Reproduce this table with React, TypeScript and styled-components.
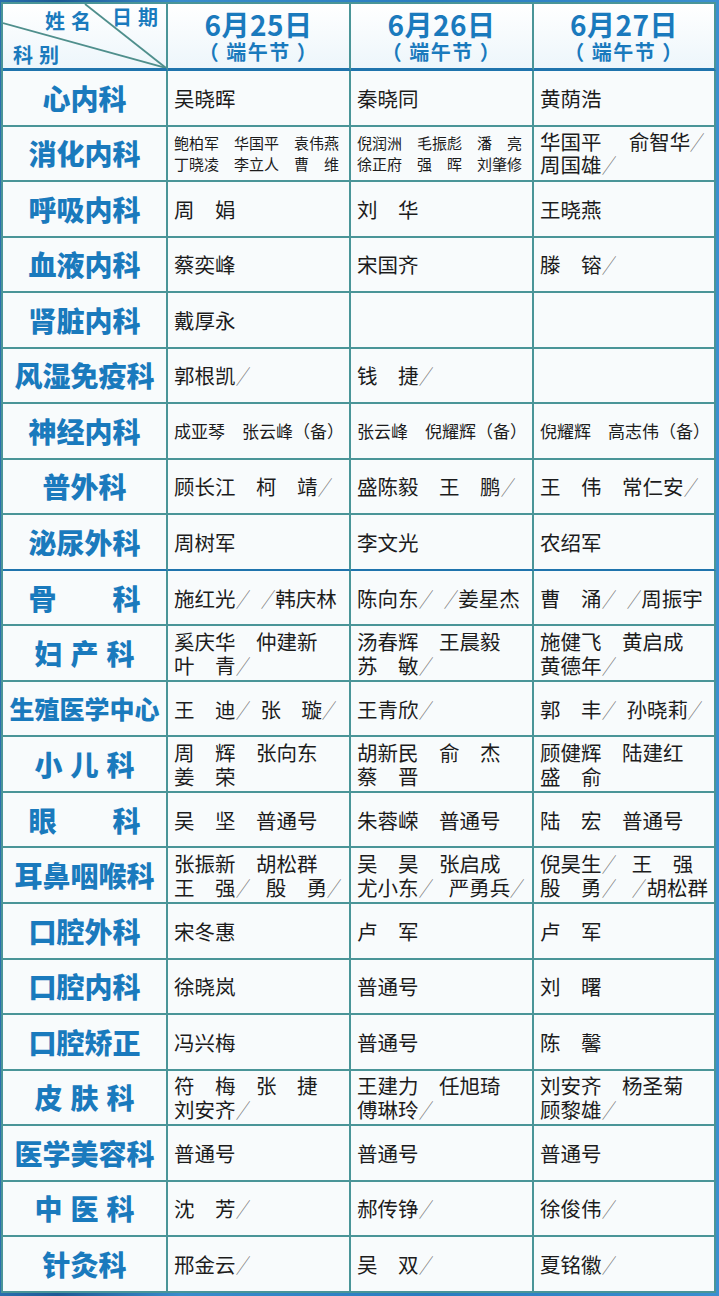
import React from "react";
import styled, { createGlobalStyle } from "styled-components";

const Global = createGlobalStyle`
  html, body { margin: 0; padding: 0; }
  body {
    width: 719px;
    background: #2a78bc;
    font-family: "Noto Sans CJK SC", "Noto Sans", sans-serif;
  }
`;

const LINE = "#4a9598";
const BLUE_LINE = "#1f74ad";
const TEXT_BLUE = "#1a7abd";

const Frame = styled.div`
  padding: 2px 3px 3px 1px;
  background: linear-gradient(90deg, #2a6fae 0%, #1d5a96 8%, #3a8ccc 25%, #2a7cc0 60%, #3b8fd0 100%);
`;

const Table = styled.div`
  display: grid;
  grid-template-columns: 165px 183px 183px 182px;
  grid-template-rows: 67px;
  grid-auto-rows: 55.545px;
  border-top: 2px solid ${LINE};
  border-left: 2px solid ${LINE};
  background: #f8fbfc;
`;

const Cell = styled.div<{ $bottom?: string; $bw?: number }>`
  box-sizing: border-box;
  border-right: 2px solid ${LINE};
  border-bottom: ${(p) => p.$bw ?? 2}px solid ${(p) => p.$bottom ?? LINE};
  overflow: hidden;
`;

const HeaderCell = styled(Cell)`
  background: linear-gradient(180deg, #ffffff 0%, #edf6fb 100%);
  display: flex;
  flex-direction: column;
  align-items: center;
  justify-content: center;
  color: ${TEXT_BLUE};
  font-weight: 700;
`;

const Corner = styled(Cell)`
  position: relative;
  overflow: visible;
  background: linear-gradient(180deg, #ffffff 0%, #edf6fb 100%);
`;

const CornerLines = styled.svg`
  position: absolute;
  left: 0;
  top: 0;
  width: 100%;
  height: 100%;
`;

const CornerLabel = styled.span<{ $x: number; $y: number }>`
  position: absolute;
  left: ${(p) => p.$x}px;
  top: ${(p) => p.$y}px;
  display: flex;
  gap: 6px;
  font-size: 20px;
  line-height: 20px;
  font-weight: 700;
  color: ${TEXT_BLUE};
  white-space: nowrap;
`;

const DateText = styled.div`
  font-size: 28px;
  line-height: 32px;
  font-weight: 700;
  letter-spacing: 0.5px;
`;

const Holiday = styled.div`
  font-size: 20px;
  line-height: 24px;
  font-weight: 700;
  letter-spacing: 1.5px;
`;

const DeptCell = styled(Cell)`
  display: flex;
  align-items: center;
  justify-content: center;
`;

const DeptName = styled.span<{ $size: number; $spacing: number }>`
  font-size: ${(p) => p.$size}px;
  font-weight: 900;
  color: ${TEXT_BLUE};
  letter-spacing: ${(p) => p.$spacing}px;
  padding-left: ${(p) => p.$spacing}px;
  white-space: nowrap;
  line-height: 1;
`;

const NameCell = styled(Cell)<{ $size: number; $lh: number }>`
  display: flex;
  flex-direction: column;
  justify-content: center;
  padding-left: 6px;
  font-size: ${(p) => p.$size}px;
  line-height: ${(p) => p.$lh}px;
  color: #1c1c1c;
  white-space: nowrap;
`;

const NameLine = styled.div``;

const Slash = styled.span`
  display: inline-block;
  color: #707070;
  font-weight: 300;
  transform: scaleX(0.72);
  margin: 0 -0.14em;
`;

type Row = {
  dept: string;
  size?: number;
  spacing?: number;
  cells: string[][];
  font?: number;
  lh?: number;
  bottom?: string;
};

const EN = "\u2002";
const MID = "\u2002\u2005";

const rows: Row[] = [
  { dept: "心内科", cells: [["吴晓晖"], ["秦晓同"], ["黄荫浩"]] },
  {
    dept: "消化内科",
    font: 15,
    lh: 21,
    cells: [
      ["鲍柏军　华国平　袁伟燕", "丁晓凌　李立人　曹　维"],
      ["倪润洲　毛振彪　潘　亮", "徐正府　强　晖　刘肇修"],
      ["__BIG__华国平　\u2004俞智华／", "__BIG__周国雄／"],
    ],
  },
  { dept: "呼吸内科", cells: [["周　娟"], ["刘　华"], ["王晓燕"]] },
  { dept: "血液内科", cells: [["蔡奕峰"], ["宋国齐"], ["滕　镕／"]] },
  { dept: "肾脏内科", cells: [["戴厚永"], [], []] },
  { dept: "风湿免疫科", cells: [["郭根凯／"], ["钱　捷／"], []] },
  {
    dept: "神经内科",
    font: 17,
    cells: [["成亚琴　张云峰（备）"], ["张云峰　倪耀辉（备）"], ["倪耀辉　高志伟（备）"]],
  },
  { dept: "普外科", cells: [["顾长江　柯　靖／"], ["盛陈毅　王　鹏／"], ["王　伟　常仁安／"]] },
  { dept: "泌尿外科", bottom: BLUE_LINE, cells: [["周树军"], ["李文光"], ["农绍军"]] },
  {
    dept: "骨　　科",
    cells: [[`施红光／${EN}／韩庆林`], [`陈向东／${EN}／姜星杰`], [`曹　涌／${EN}／周振宇`]],
  },
  {
    dept: "妇产科",
    spacing: 8,
    cells: [
      ["奚庆华　仲建新", "叶　青／"],
      ["汤春辉　王晨毅", "苏　敏／"],
      ["施健飞　黄启成", "黄德年／"],
    ],
  },
  {
    dept: "生殖医学中心",
    size: 25,
    cells: [[`王　迪／${EN}张　璇／`], ["王青欣／"], [`郭　丰／${EN}孙晓莉／`]],
  },
  {
    dept: "小儿科",
    spacing: 8,
    cells: [
      ["周　辉　张向东", "姜　荣"],
      ["胡新民　俞　杰", "蔡　晋"],
      ["顾健辉　陆建红", "盛　俞"],
    ],
  },
  {
    dept: "眼　　科",
    cells: [["吴　坚　普通号"], ["朱蓉嵘　普通号"], ["陆　宏　普通号"]],
  },
  {
    dept: "耳鼻咽喉科",
    cells: [
      ["张振新　胡松群", `王　强／${MID}殷　勇／`],
      ["吴　昊　张启成", `尤小东／${MID}严勇兵／`],
      [`倪昊生／${MID}王　强`, `殷　勇／${MID}／胡松群`],
    ],
  },
  { dept: "口腔外科", cells: [["宋冬惠"], ["卢　军"], ["卢　军"]] },
  { dept: "口腔内科", cells: [["徐晓岚"], ["普通号"], ["刘　曙"]] },
  { dept: "口腔矫正", cells: [["冯兴梅"], ["普通号"], ["陈　馨"]] },
  {
    dept: "皮肤科",
    spacing: 8,
    cells: [
      ["符　梅　张　捷", "刘安齐／"],
      ["王建力　任旭琦", "傅琳玲／"],
      ["刘安齐　杨圣菊", "顾黎雄／"],
    ],
  },
  { dept: "医学美容科", cells: [["普通号"], ["普通号"], ["普通号"]] },
  { dept: "中医科", spacing: 8, cells: [["沈　芳／"], ["郝传铮／"], ["徐俊伟／"]] },
  { dept: "针灸科", cells: [["邢金云／"], ["吴　双／"], ["夏铭徽／"]] },
];

const renderLine = (text: string) => {
  const parts = text.split("／");
  return parts.map((p, i) => (
    <React.Fragment key={i}>
      {p}
      {i < parts.length - 1 && <Slash>／</Slash>}
    </React.Fragment>
  ));
};

const dates = ["6月25日", "6月26日", "6月27日"];

const Label = ({ x, y, text }: { x: number; y: number; text: string }) => (
  <CornerLabel $x={x} $y={y}>
    {text.split("").map((c, i) => (
      <span key={i}>{c}</span>
    ))}
  </CornerLabel>
);

export default function App() {
  return (
    <>
      <Global />
      <Frame>
        <Table>
          <Corner $bottom={BLUE_LINE} $bw={3}>
            <CornerLines viewBox="0 0 163 64" preserveAspectRatio="none">
              <line x1="82" y1="0" x2="163" y2="64" stroke="#4f8f8c" strokeWidth="1.8" />
              <line x1="0" y1="19" x2="163" y2="64" stroke="#4f8f8c" strokeWidth="1.8" />
            </CornerLines>
            <Label x={42} y={7} text="姓名" />
            <Label x={109} y={3} text="日期" />
            <Label x={10} y={41} text="科别" />
          </Corner>
          {dates.map((d) => (
            <HeaderCell key={d} $bottom={BLUE_LINE} $bw={3}>
              <DateText>{d}</DateText>
              <Holiday>（ 端午节 ）</Holiday>
            </HeaderCell>
          ))}
          {rows.map((r) => (
            <React.Fragment key={r.dept}>
              <DeptCell $bottom={r.bottom}>
                <DeptName $size={r.size ?? 28} $spacing={r.spacing ?? 0}>
                  {r.dept}
                </DeptName>
              </DeptCell>
              {r.cells.map((lines, ci) => {
                const big = lines.some((l) => l.startsWith("__BIG__"));
                const font = big ? 20.5 : r.font ?? 20.5;
                const lh = big ? 23 : r.lh ?? 24;
                return (
                  <NameCell key={ci} $size={font} $lh={lh} $bottom={r.bottom}>
                    {lines.map((l, li) => (
                      <NameLine key={li}>{renderLine(l.replace("__BIG__", ""))}</NameLine>
                    ))}
                  </NameCell>
                );
              })}
            </React.Fragment>
          ))}
        </Table>
      </Frame>
    </>
  );
}
